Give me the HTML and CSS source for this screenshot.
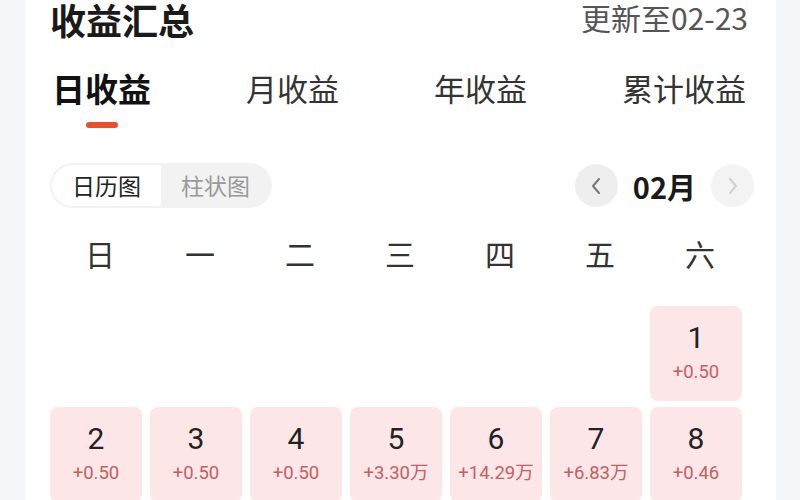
FILE: index.html
```html
<!DOCTYPE html>
<html lang="zh-CN">
<head>
<meta charset="utf-8">
<title>收益汇总</title>
<link rel="stylesheet" href="styles.css">
</head>
<body>
<div class="panel">
  <div class="header">
    <div class="title">收益汇总</div>
    <div class="update">更新至02-23</div>
  </div>
  <div class="tabs">
    <div class="tab active"><span class="tab-label">日收益</span><span class="bar"></span></div>
    <div class="tab"><span class="tab-label">月收益</span></div>
    <div class="tab"><span class="tab-label">年收益</span></div>
    <div class="tab"><span class="tab-label">累计收益</span></div>
  </div>
  <div class="toolbar">
    <div class="seg">
      <div class="seg-item on">日历图</div>
      <div class="seg-item">柱状图</div>
    </div>
    <div class="month">
      <span class="circle prev"><svg width="16" height="20" viewBox="0 0 16 20"><polyline points="11,3 5,10 11,17" fill="none" stroke="#777" stroke-width="2" stroke-linecap="round" stroke-linejoin="round"/></svg></span>
      <span class="month-label">02月</span>
      <span class="circle next"><svg width="16" height="20" viewBox="0 0 16 20"><polyline points="5,3 11,10 5,17" fill="none" stroke="#d0d0d0" stroke-width="2" stroke-linecap="round" stroke-linejoin="round"/></svg></span>
    </div>
  </div>
  <div class="weekdays">
    <span>日</span><span>一</span><span>二</span><span>三</span><span>四</span><span>五</span><span>六</span>
  </div>
  <div class="grid">
    <div class="empty"></div><div class="empty"></div><div class="empty"></div><div class="empty"></div><div class="empty"></div><div class="empty"></div>
    <div class="cell"><span class="num">1</span><span class="val">+0.50</span></div>
    <div class="cell"><span class="num">2</span><span class="val">+0.50</span></div>
    <div class="cell"><span class="num">3</span><span class="val">+0.50</span></div>
    <div class="cell"><span class="num">4</span><span class="val">+0.50</span></div>
    <div class="cell"><span class="num">5</span><span class="val">+3.30万</span></div>
    <div class="cell"><span class="num">6</span><span class="val">+14.29万</span></div>
    <div class="cell"><span class="num">7</span><span class="val">+6.83万</span></div>
    <div class="cell"><span class="num">8</span><span class="val">+0.46</span></div>
  </div>
</div>
</body>
</html>
```
FILE: styles.css
```css
* { box-sizing: border-box; }
html, body { margin: 0; padding: 0; }
body {
  background: #f5f6f7;
  font-family: "Noto Sans CJK SC", "Noto Sans", sans-serif;
  color: #222;
  width: 800px;
  height: 500px;
  overflow: hidden;
}
.panel {
  margin-left: 25px;
  width: 751px;
  height: 500px;
  background: #fff;
  padding: 0 26px 0 25px;
}
.header {
  display: flex;
  justify-content: space-between;
  align-items: flex-start;
  height: 40px;
}
.title {
  font-size: 36px;
  font-weight: 700;
  line-height: 38px;
  margin-top: 0;
  color: #1a1a1a;
}
.update {
  font-size: 30px;
  line-height: 36px;
  color: #555;
  margin-right: 2px;
  margin-top: -1px;
}
.tabs {
  margin-top: 30px;
  display: flex;
  justify-content: space-between;
  align-items: flex-start;
  margin-right: 4px;
  margin-left: 2px;
}
.tab {
  display: flex;
  flex-direction: column;
  align-items: center;
}
.tab-label {
  font-size: 31px;
  line-height: 36px;
  color: #333;
}
.tab.active .tab-label {
  font-size: 33px;
  font-weight: 700;
  color: #111;
}
.bar {
  width: 32px;
  height: 6px;
  border-radius: 3px;
  background: #e8502a;
  margin-top: 16px;
}
.toolbar {
  margin-top: 35px;
  display: flex;
  justify-content: space-between;
  align-items: center;
  height: 45px;
}
.seg {
  display: flex;
  background: #f2f2f2;
  border-radius: 23px;
  padding: 2px;
  height: 45px;
}
.seg-item {
  font-size: 23px;
  line-height: 41px;
  padding: 0 20px;
  color: #999;
}
.seg-item.on {
  background: #fff;
  color: #222;
  border-radius: 21px 3px 3px 21px;
}
.month {
  display: flex;
  align-items: center;
  gap: 15px;
  margin-right: -4px;
}
.circle {
  width: 43px;
  height: 43px;
  border-radius: 50%;
  background: #eeeeee;
  display: flex;
  align-items: center;
  justify-content: center;
}
.circle.next { background: #f3f3f3; }
.month-label {
  font-size: 29px;
  font-weight: 700;
  line-height: 36px;
  color: #1a1a1a;
}
.weekdays {
  margin-top: 27px;
  display: grid;
  grid-template-columns: repeat(7, 100px);
  font-size: 30px;
  line-height: 36px;
  color: #333;
  text-align: center;
}
.grid {
  margin-top: 35px;
  display: grid;
  grid-template-columns: repeat(7, 92px);
  grid-auto-rows: 95px;
  column-gap: 8px;
  row-gap: 6px;
}
.cell {
  background: #fde6e8;
  border-radius: 8px;
  display: flex;
  flex-direction: column;
  align-items: center;
  padding-top: 15px;
}
.num {
  font-family: Roboto, "Noto Sans", sans-serif;
  font-size: 30px;
  line-height: 34px;
  color: #222;
}
.val {
  font-family: Roboto, "Noto Sans CJK SC", sans-serif;
  font-size: 18.5px;
  line-height: 20px;
  margin-top: 7px;
  color: #c4605f;
}
```
